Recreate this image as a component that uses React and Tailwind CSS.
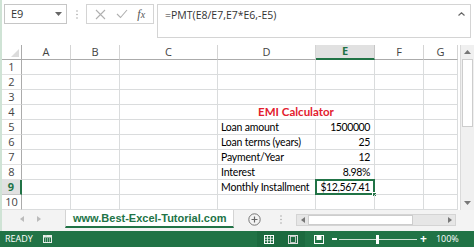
import React from "react";

const cols = ["A", "B", "C", "D", "E", "F", "G"];
const rows = [
  { n: 1 }, { n: 2 }, { n: 3 },
  { n: 4, title: "EMI Calculator" },
  { n: 5, d: "Loan amount", e: "1500000" },
  { n: 6, d: "Loan terms (years)", e: "25" },
  { n: 7, d: "Payment/Year", e: "12" },
  { n: 8, d: "Interest", e: "8.98%" },
  { n: 9, d: "Monthly Installment", e: "$12,567.41", sel: true },
  { n: 10 },
];

const cellFont = { fontFamily: "Lato, 'Liberation Sans', sans-serif" };
const uiFont = { fontFamily: "'Open Sans', 'Liberation Sans', sans-serif" };

function Cell({ children, className = "" }) {
  return (
    <div className={"h-[15px] border-r border-b border-[#dadcdd] relative " + className}>
      {children}
    </div>
  );
}

export default function App() {
  return (
    <div className="w-[474px] h-[247px] bg-white overflow-hidden flex flex-col" style={uiFont}>
      <div className="flex-1 flex border-l-2 border-[#cfe3d5] min-h-0">
        <div className="flex-1 flex flex-col min-w-0">
          {/* formula bar area */}
          <div className="h-[45px] flex items-start pt-[4px] pl-[2px] pr-[3px]">
            <div className="w-[63px] h-[20px] border border-[#c6c6c6] flex items-center justify-between pl-[6px] pr-[4px] text-[11px] text-[#333]">
              <span>E9</span>
              <svg width="7" height="4" viewBox="0 0 7 4"><path d="M0 0h7L3.5 4z" fill="#666" /></svg>
            </div>
            <div className="w-[19px] h-[20px] flex items-center justify-center">
              <svg width="2" height="9" viewBox="0 0 2 9"><circle cx="1" cy="1" r="0.8" fill="#aaa" /><circle cx="1" cy="4.5" r="0.8" fill="#aaa" /><circle cx="1" cy="8" r="0.8" fill="#aaa" /></svg>
            </div>
            <div className="w-[68px] h-[20px] border border-[#d4d4d4] flex items-center justify-around px-[3px]">
              <svg width="11" height="11" viewBox="0 0 11 11"><path d="M1 1l9 9M10 1l-9 9" stroke="#b0b0b0" strokeWidth="1.1" /></svg>
              <svg width="12" height="10" viewBox="0 0 12 10"><path d="M1 5l3.5 3.5L11 1" stroke="#b0b0b0" strokeWidth="1.1" fill="none" /></svg>
              <span className="text-[12px] italic text-[#555]" style={{ fontFamily: "'Liberation Serif', serif" }}>f<span className="text-[10px]">x</span></span>
            </div>
            <div className="ml-[3px] flex-1 h-[34px] border border-[#d4d4d4] flex items-start justify-between pl-[7px] pr-[5px] pt-[3px] text-[10.5px] text-[#333]">
              <span>=PMT(E8/E7,E7*E6,-E5)</span>
              <svg className="mt-[4px]" width="7" height="4" viewBox="0 0 7 4"><path d="M0.5 3.5L3.5 0.8L6.5 3.5" stroke="#666" strokeWidth="1.2" fill="none" /></svg>
            </div>
          </div>

          {/* grid */}
          <div className="flex min-h-0">
            <div className="grid grid-cols-[20px_49px_49px_98px_98px_59px_49px_34px] w-[456px]">
              {/* header row */}
              <div className="h-[15px] border-r border-b border-[#ababab] relative">
                <svg className="absolute right-[2px] bottom-[2px]" width="8" height="8" viewBox="0 0 8 8"><path d="M8 0V8H0z" fill="#dcdcdc" /></svg>
              </div>
              {cols.map((c) =>
                c === "E" ? (
                  <div key={c} className="h-[15px] bg-[#e1e1e1] border-r border-[#c6c6c6] border-b-2 border-b-[#217346] flex items-center justify-center text-[11px] font-bold text-[#217346]">
                    {c}
                  </div>
                ) : (
                  <div key={c} className="h-[15px] border-r border-b border-[#d4d4d4] border-b-[#ababab] flex items-center justify-center text-[11px] text-[#444]">
                    {c}
                  </div>
                )
              )}
              {rows.map((r) => (
                <React.Fragment key={r.n}>
                  {r.sel ? (
                    <div className="h-[15px] bg-[#e1e1e1] border-r-2 border-[#217346] border-b border-b-[#c6c6c6] flex items-center justify-center text-[11px] font-bold text-[#217346]">
                      {r.n}
                    </div>
                  ) : (
                    <div className="h-[15px] border-r border-[#ababab] border-b border-b-[#e1e1e1] flex items-center justify-center text-[11px] text-[#444]">
                      {r.n}
                    </div>
                  )}
                  <Cell />
                  <Cell />
                  <Cell />
                  {r.title ? (
                    <div className="col-span-2 h-[15px] border-r border-b border-[#dadcdd] flex items-center justify-center text-[11.5px] font-bold text-[#e3202e]" style={cellFont}>
                      {r.title}
                    </div>
                  ) : (
                    <>
                      <Cell>
                        {r.d && (
                          <span className="absolute left-[3px] top-0 leading-[15px] text-[10.5px] tracking-[-0.2px] text-black whitespace-nowrap" style={cellFont}>
                            {r.d}
                          </span>
                        )}
                      </Cell>
                      <Cell>
                        {r.e && (
                          <span className="absolute right-[4px] top-0 leading-[15px] text-[10.5px] tracking-[-0.4px] text-black whitespace-nowrap" style={cellFont}>
                            {r.e}
                          </span>
                        )}
                        {r.sel && (
                          <>
                            <div className="absolute left-[-1px] top-[-1px] right-[-1px] bottom-[-1px] border-2 border-[#217346]" />
                            <div className="absolute right-[-3px] bottom-[-3px] w-[5px] h-[5px] bg-[#217346] border border-white" />
                          </>
                        )}
                      </Cell>
                    </>
                  )}
                  <Cell />
                  <Cell />
                </React.Fragment>
              ))}
            </div>
            {/* vertical scrollbar */}
            <div className="w-[14px] ml-[2px] h-[165px] bg-[#f0f0f0] border-l border-[#dadada] flex flex-col items-center">
              <div className="h-[14px] w-full flex items-center justify-center">
                <svg width="7" height="4" viewBox="0 0 7 4"><path d="M0 4h7L3.5 0z" fill="#777" /></svg>
              </div>
              <div className="w-[11px] h-[68px] bg-white border border-[#cdcdcd]" />
              <div className="flex-1" />
              <div className="h-[14px] w-full flex items-center justify-center">
                <svg width="7" height="4" viewBox="0 0 7 4"><path d="M0 0h7L3.5 4z" fill="#777" /></svg>
              </div>
            </div>
          </div>

          {/* sheet tabs bar */}
          <div className="h-[21px] bg-[#f3f3f3] flex items-start">
            <div className="w-[63px] h-[18px] flex items-center gap-[13px] pl-[18px]">
              <svg width="4" height="6" viewBox="0 0 4 6"><path d="M4 0v6L0 3z" fill="#bbb" /></svg>
              <svg width="4" height="6" viewBox="0 0 4 6"><path d="M0 0v6l4-3z" fill="#bbb" /></svg>
            </div>
            <div className="h-[18px] bg-white border-x border-[#d4d4d4] border-b-2 border-b-[#217346] px-[7px] flex items-center text-[11px] font-bold text-[#217346]" style={{ fontFamily: "'Liberation Sans', sans-serif" }}>
              www.Best-Excel-Tutorial.com
            </div>
            <div className="w-[40px] h-[18px] flex items-center justify-center">
              <svg width="13" height="13" viewBox="0 0 13 13"><circle cx="6.5" cy="6.5" r="5.7" stroke="#777" strokeWidth="1" fill="none" /><path d="M6.5 3.5v6M3.5 6.5h6" stroke="#666" strokeWidth="1.2" /></svg>
            </div>
            <div className="w-[14px] h-[18px] flex items-center justify-center">
              <svg width="2" height="9" viewBox="0 0 2 9"><circle cx="1" cy="1" r="0.8" fill="#aaa" /><circle cx="1" cy="4.5" r="0.8" fill="#aaa" /><circle cx="1" cy="8" r="0.8" fill="#aaa" /></svg>
            </div>
            <div className="mt-[4px] ml-[8px] w-[160px] h-[12px] bg-[#e6e6e6] border border-[#d4d4d4] flex items-center">
              <div className="w-[11px] flex items-center justify-center">
                <svg width="4" height="6" viewBox="0 0 4 6"><path d="M4 0v6L0 3z" fill="#777" /></svg>
              </div>
              <div className="w-[105px] h-[10px] bg-white border border-[#cdcdcd]" />
              <div className="flex-1" />
              <div className="w-[11px] flex items-center justify-center">
                <svg width="4" height="6" viewBox="0 0 4 6"><path d="M0 0v6l4-3z" fill="#777" /></svg>
              </div>
            </div>
          </div>
        </div>
      </div>

      {/* status bar */}
      <div className="h-[16px] bg-[#217346] flex items-center text-white text-[9px]">
        <span className="pl-[5px] w-[43px]">READY</span>
        <svg width="9" height="8" viewBox="0 0 9 8"><rect x="0.5" y="1.5" width="8" height="6" fill="none" stroke="#e8f0ea" strokeWidth="1" /><rect x="0" y="0" width="9" height="2.5" fill="#e8f0ea" /><path d="M2 4h1M4 4h1M6 4h1M2 6h1M4 6h1M6 6h1" stroke="#e8f0ea" /><circle cx="3" cy="0.8" r="1" fill="#cde0d3" /></svg>
        <div className="ml-[205px] h-full w-[48px] bg-[#1c6a3f] flex items-center justify-around">
          <svg width="10" height="9" viewBox="0 0 10 9"><rect x="0.5" y="0.5" width="9" height="8" fill="none" stroke="#fff" /><path d="M0 3.2h10M0 5.8h10M3.5 0v9M6.5 0v9" stroke="#fff" strokeWidth="0.8" /></svg>
          <svg width="10" height="9" viewBox="0 0 10 9"><rect x="0.5" y="0.5" width="9" height="8" fill="none" stroke="#e0e0e0" /><rect x="2.5" y="1.5" width="5" height="6" fill="none" stroke="#e0e0e0" strokeWidth="0.8" /></svg>
        </div>
        <svg className="ml-[9px]" width="10" height="9" viewBox="0 0 10 9"><rect x="0.5" y="0.5" width="9" height="8" fill="none" stroke="#fff" /><rect x="2.5" y="0" width="5" height="5" fill="#fff" /></svg>
        <div className="ml-[8px] w-[5px] h-[1.5px] bg-white" />
        <div className="ml-[2px] relative w-[78px] h-[1px] bg-[#d0e3d6]">
          <div className="absolute left-[37px] top-[-4px] w-[3px] h-[9px] bg-white" />
        </div>
        <span className="ml-[3px] text-[12px] font-bold leading-none">+</span>
        <span className="ml-[9px] text-[9px]">100%</span>
      </div>
    </div>
  );
}
